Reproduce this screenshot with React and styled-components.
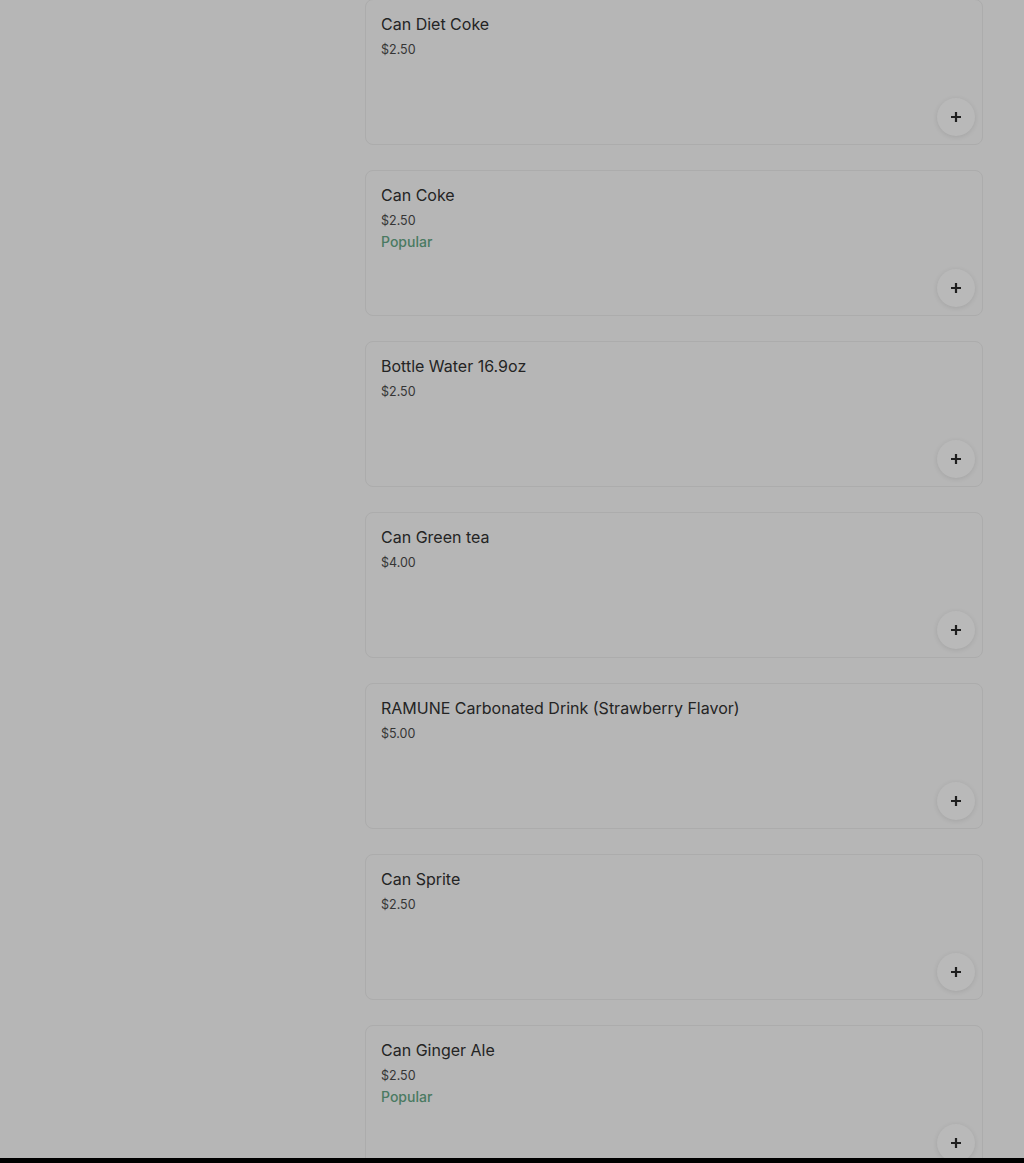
import styled, { createGlobalStyle } from "styled-components";

const GlobalStyle = createGlobalStyle`
  html, body {
    margin: 0;
    padding: 0;
    background: #b6b6b6;
    font-family: Inter, Roboto, "Liberation Sans", Arial, sans-serif;
  }
`;

const items = [
  { name: "Can Diet Coke", price: "$2.50" },
  { name: "Can Coke", price: "$2.50", popular: true },
  { name: "Bottle Water 16.9oz", price: "$2.50" },
  { name: "Can Green tea", price: "$4.00" },
  { name: "RAMUNE Carbonated Drink (Strawberry Flavor)", price: "$5.00" },
  { name: "Can Sprite", price: "$2.50" },
  { name: "Can Ginger Ale", price: "$2.50", popular: true },
];

const App = () => {
  return (
    <>
      <GlobalStyle />
      <Screen>
        <Layout>
          <Sidebar />
          <List>
            {items.map((item) => (
              <Card key={item.name}>
                <Title>{item.name}</Title>
                <Price>{item.price}</Price>
                {item.popular && <Popular>Popular</Popular>}
                <AddButton aria-label="Add">
                  <svg width="12" height="12" viewBox="0 0 12 12">
                    <path
                      d="M6 1v10M1 6h10"
                      stroke="#1f1f1f"
                      strokeWidth="2.2"
                    />
                  </svg>
                </AddButton>
              </Card>
            ))}
          </List>
        </Layout>
      </Screen>
      <BottomBar />
    </>
  );
};

const Screen = styled.div`
  height: 1158px;
  overflow: hidden;
`;

const Layout = styled.div`
  display: grid;
  grid-template-columns: 365px 618px;
  margin-top: -1px;
`;

const Sidebar = styled.div``;

const List = styled.div`
  display: flex;
  flex-direction: column;
  gap: 25px;
`;

const Card = styled.div`
  display: flex;
  flex-direction: column;
  box-sizing: border-box;
  height: 146px;
  padding: 14px 7px 8px 15px;
  border: 1px solid #acacac;
  border-radius: 8px;
`;

const Title = styled.div`
  font-size: 16px;
  line-height: 20px;
  font-weight: 400;
  color: #242424;
`;

const Price = styled.div`
  margin-top: 6px;
  font-size: 12.5px;
  line-height: 20px;
  color: #353535;
`;

const Popular = styled.div`
  margin-top: 1px;
  font-size: 14px;
  line-height: 20px;
  font-weight: 500;
  color: #4a7a62;
`;

const AddButton = styled.button`
  margin-top: auto;
  align-self: flex-end;
  width: 38px;
  height: 38px;
  border: none;
  border-radius: 50%;
  background: #b9b9b9;
  box-shadow: 0 1px 5px rgba(0, 0, 0, 0.1);
  display: flex;
  align-items: center;
  justify-content: center;
  padding: 0;
`;

const BottomBar = styled.div`
  height: 5px;
  background: #000;
`;

export default App;
